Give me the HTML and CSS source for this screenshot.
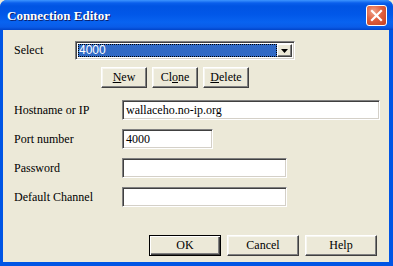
FILE: index.html
```html
<!DOCTYPE html>
<html>
<head>
<meta charset="utf-8">
<link rel="stylesheet" href="styles.css">
</head>
<body>
<div class="window">
  <div class="titlebar">
    <span class="title">Connection Editor</span>
    <span class="close"><svg width="13" height="13" viewBox="0 0 13 13"><path d="M2 2 L11 11 M11 2 L2 11" stroke="#fff" stroke-width="2.2" stroke-linecap="square"/></svg></span>
  </div>
  <div class="content">
    <div class="select-row">
      <span class="label sel-label">Select</span>
      <div class="combo">
        <div class="combo-value"><span class="hl">4000</span></div>
        <div class="combo-btn"><svg width="7" height="4" viewBox="0 0 7 4"><path d="M0 0 H7 L3.5 4 Z" fill="#000"/></svg></div>
      </div>
    </div>
    <div class="btn-row">
      <button class="btn small"><u>N</u>ew</button>
      <button class="btn small">Cl<u>o</u>ne</button>
      <button class="btn small"><u>D</u>elete</button>
    </div>
    <div class="form">
      <span class="label">Hostname or IP</span>
      <div class="input wide">wallaceho.no-ip.org</div>
      <span class="label">Port number</span>
      <div class="input short">4000</div>
      <span class="label">Password</span>
      <div class="input mid"></div>
      <span class="label">Default Channel</span>
      <div class="input mid"></div>
    </div>
    <div class="footer">
      <button class="btn big default">OK</button>
      <button class="btn big">Cancel</button>
      <button class="btn big">Help</button>
    </div>
  </div>
</div>
</body>
</html>
```

FILE: styles.css
```css
html, body {
  margin: 0;
  padding: 0;
  background: #ece9d8;
}
body {
  width: 393px;
  height: 266px;
  overflow: hidden;
  font-family: "Liberation Serif", "Times New Roman", serif;
  font-size: 12px;
  color: #000;
}
.window {
  width: 393px;
  height: 266px;
  box-sizing: border-box;
  display: flex;
  flex-direction: column;
  background: #0055e5;
  border-radius: 7px 7px 0 0;
  overflow: hidden;
}
.titlebar {
  height: 30px;
  flex: none;
  display: flex;
  align-items: center;
  justify-content: space-between;
  padding: 0 6px 0 7px;
  background: linear-gradient(to bottom, #3d95ff 0px, #0a5fec 3px, #0054e3 6px, #0157e8 14px, #0863f0 22px, #0a5ce8 27px, #0144c9 30px);
}
.title {
  color: #fff;
  font-weight: bold;
  font-size: 13px;
  text-shadow: 1px 1px 0 #0a1e6a;
  margin-top: 1px;
}
.close {
  width: 19px;
  height: 19px;
  margin-top: 1px;
  border: 1px solid #fff;
  border-radius: 3px;
  background: radial-gradient(circle at 35% 30%, #f0a38a 0%, #e0603f 45%, #c5401f 100%);
  display: flex;
  align-items: center;
  justify-content: center;
}
.content {
  flex: 1;
  margin: 0 4px 4px 3px;
  background: #ece9d8;
  padding: 11px 0 0 11px;
  display: flex;
  flex-direction: column;
}
.label {
  white-space: nowrap;
}
.select-row {
  display: flex;
  align-items: center;
  height: 19px;
}
.sel-label {
  width: 61px;
}
.combo {
  width: 220px;
  height: 19px;
  box-sizing: border-box;
  border-top: 1px solid #808080;
  border-left: 1px solid #808080;
  border-bottom: 1px solid #fff;
  border-right: 1px solid #fff;
  box-shadow: inset 1px 1px 0 #404040, inset -1px -1px 0 #d4d0c8;
  background: #fff;
  display: flex;
  padding: 2px;
}
.combo-value {
  flex: 1;
  display: flex;
}
.hl {
  flex: 1;
  background: #316ac5;
  color: #fff;
  outline: 1px dotted #000;
  outline-offset: -1px;
  font-family: "Liberation Sans", Arial, sans-serif;
  font-size: 12px;
  line-height: 13px;
  padding-left: 1px;
}
.combo-btn {
  width: 15px;
  box-sizing: border-box;
  background: #ece9d8;
  border-top: 1px solid #fff;
  border-left: 1px solid #fff;
  border-right: 1px solid #404040;
  border-bottom: 1px solid #404040;
  box-shadow: inset -1px -1px 0 #808080;
  display: flex;
  align-items: center;
  justify-content: center;
}
.btn {
  font-family: "Liberation Serif", "Times New Roman", serif;
  font-size: 12px;
  color: #000;
  background: #ece9d8;
  box-sizing: border-box;
  border-top: 1px solid #fff;
  border-left: 1px solid #fff;
  border-right: 1px solid #404040;
  border-bottom: 1px solid #404040;
  box-shadow: inset -1px -1px 0 #808080, inset 1px 1px 0 #f7f6f0;
  padding: 0;
  margin: 0;
}
.btn u {
  text-decoration: underline;
}
.btn-row {
  display: flex;
  gap: 5px;
  margin-top: 7px;
  padding-left: 87px;
}
.btn.small {
  width: 46px;
  height: 21px;
}
.form {
  display: grid;
  grid-template-columns: 108px auto;
  row-gap: 9px;
  align-items: center;
  justify-items: start;
  margin-top: 12px;
}
.input {
  height: 20px;
  box-sizing: border-box;
  background: #fff;
  border-top: 1px solid #808080;
  border-left: 1px solid #808080;
  border-bottom: 1px solid #fff;
  border-right: 1px solid #fff;
  box-shadow: inset 1px 1px 0 #404040, inset -1px -1px 0 #d4d0c8;
  padding: 2px 3px;
  line-height: 15px;
  font-size: 12px;
  white-space: nowrap;
}
.input.wide { width: 258px; }
.input.short { width: 91px; }
.input.mid { width: 165px; }
.footer {
  display: flex;
  gap: 6px;
  margin-top: 28px;
  padding-left: 135px;
}
.btn.big {
  width: 72px;
  height: 21px;
}
.btn.default {
  border: 1px solid #000;
  box-shadow: inset 1px 1px 0 #fff, inset -1px -1px 0 #404040, inset -2px -2px 0 #808080;
}
```
